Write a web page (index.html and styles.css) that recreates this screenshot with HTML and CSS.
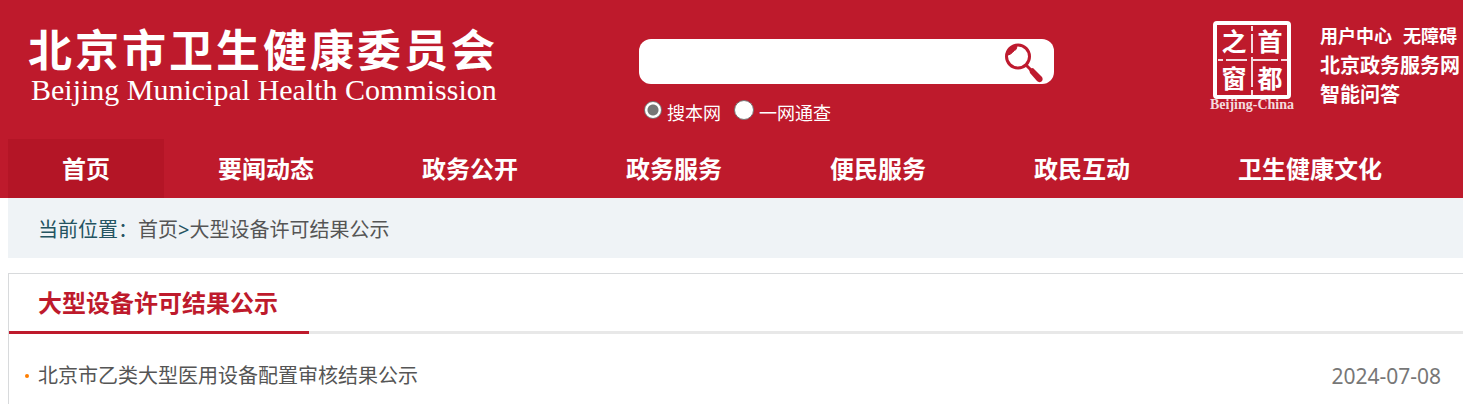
FILE: index.html
```html
<!DOCTYPE html>
<html lang="zh-CN">
<head>
<meta charset="utf-8">
<title>北京市卫生健康委员会</title>
<link rel="stylesheet" href="styles.css">
</head>
<body>
<header class="site-header">
  <div class="banner">
    <div class="brand">
      <div class="brand-cn"><span>北</span><span>京</span><span>市</span><span>卫</span><span>生</span><span>健</span><span>康</span><span>委</span><span>员</span><span>会</span></div>
      <div class="brand-en">Beijing Municipal Health Commission</div>
    </div>
    <form class="search">
      <div class="search-box">
        <input class="search-input" type="text" aria-label="搜索">
        <button class="search-button" type="button" aria-label="搜索">
          <svg width="40" height="42" viewBox="0 0 40 42" fill="none" stroke="#be1a2e" aria-hidden="true">
            <circle cx="14" cy="15.500" r="11.500" stroke-width="3"/>
            <path d="M4.500 14C4 8 9 5 13 5.500L12 8.500C10 9 8 13 4.500 14Z" fill="#be1a2e" stroke-width="1"/>
            <path d="M22 24L27 29" stroke-width="3"/>
            <path d="M25 28L29 27L38 36Q39.500 38.500 37.500 40.500Q35 42 33 40L26 32Z" fill="#be1a2e" stroke="none"/>
          </svg>
        </button>
      </div>
      <div class="scope">
        <label class="scope-item"><input class="radio" type="radio" name="scope" checked>搜本网</label>
        <label class="scope-item"><input class="radio radio-large" type="radio" name="scope">一网通查</label>
      </div>
    </form>
    <div class="portal">
      <svg class="seal" width="88" height="92" viewBox="0 0 88 92" role="img" aria-label="首都之窗">
        <rect x="7" y="2" width="74" height="74" rx="2" fill="none" stroke="#fff" stroke-width="4"/>
        <path d="M44 5V10M44 13V32M44 36V66M44 69V74M10 39H15M18 39H39M43 39H70M73 39H79" stroke="#fff" stroke-width="2" stroke-opacity=".85"/>
        <g class="seal-char">
          <text x="26" y="30">之</text>
          <text x="62" y="30">首</text>
          <text x="26" y="67">窗</text>
          <text x="62" y="67">都</text>
        </g>
        <text class="seal-name" x="44" y="88">Beijing-China</text>
      </svg>
      <div class="portal-links">
        <div class="portal-row"><a href="#">用户中心</a><a href="#">无障碍</a></div>
        <a class="portal-large" href="#">北京政务服务网</a>
        <a class="portal-large" href="#">智能问答</a>
      </div>
    </div>
  </div>
  <nav class="nav">
    <a class="nav-item nav-current" href="#">首页</a>
    <a class="nav-item" href="#">要闻动态</a>
    <a class="nav-item" href="#">政务公开</a>
    <a class="nav-item" href="#">政务服务</a>
    <a class="nav-item" href="#">便民服务</a>
    <a class="nav-item" href="#">政民互动</a>
    <a class="nav-item" href="#">卫生健康文化</a>
  </nav>
</header>
<main class="content">
  <div class="crumbs">当前位置：<a href="#">首页</a>&gt;<a href="#">大型设备许可结果公示</a></div>
  <section class="panel">
    <div class="panel-head"><h1 class="panel-title">大型设备许可结果公示</h1></div>
    <ul class="list">
      <li class="list-item"><a class="list-link" href="#">北京市乙类大型医用设备配置审核结果公示</a><time class="list-date">2024-07-08</time></li>
    </ul>
  </section>
</main>
</body>
</html>
```
FILE: styles.css
```css
* { box-sizing: border-box; }

body {
  margin: 0;
  background: #fff;
  color: #245461;
  font-family: "Noto Sans", "Noto Sans CJK SC", sans-serif;
  overflow-x: hidden;
}

a { color: inherit; text-decoration: none; white-space: nowrap; }

.site-header { background: #be1a2c; color: #fff; }

.banner {
  display: grid;
  grid-template-columns: 639fr 569fr 255fr;
  min-height: 139px;
}

.brand { padding: 23px 0 0 28px; white-space: nowrap; }
.brand-cn {
  display: flex;
  gap: 3px;
  font-family: "Noto Sans CJK SC", sans-serif;
  font-size: 44px;
  font-weight: 700;
  line-height: 50px;
}
.brand-en {
  padding-left: 3px;
  font-family: "Liberation Serif", serif;
  font-size: 30px;
  line-height: 34px;
}

.search { padding-top: 39px; }
.search-box {
  display: flex;
  width: 73%;
  height: 45px;
  border-radius: 12px;
  background: #fff;
}
.search-input {
  flex: 1;
  min-width: 0;
  border: 0;
  padding: 0 12px;
  background: transparent;
  font-size: 18px;
  outline: 0;
}
.search-button {
  width: 50px;
  padding: 0;
  border: 0;
  background: transparent;
  text-align: left;
}
.search-button svg { display: block; }

.scope {
  display: flex;
  gap: 13px;
  padding: 16px 0 0 5px;
  font-size: 18px;
  line-height: 26px;
}
.scope-item { display: flex; gap: 5px; white-space: nowrap; }
.radio {
  appearance: none;
  width: 18px;
  height: 18px;
  margin: 1px 0 0;
  border: 1px solid #767676;
  border-radius: 50%;
  background: #fff;
}
.radio:checked {
  background: radial-gradient(circle, #767676 5px, #fff 6px);
}
.radio-large { width: 20px; height: 20px; margin: 0; }

.portal { display: flex; gap: 24px; }
.seal { flex: none; margin-top: 21px; }
.seal-char {
  fill: #fff;
  font-family: "Noto Sans CJK SC", sans-serif;
  font-size: 25px;
  font-weight: 700;
  text-anchor: middle;
}
.seal-name {
  fill: #fff;
  fill-opacity: .85;
  font-family: "Liberation Serif", serif;
  font-size: 14px;
  font-weight: 700;
  text-anchor: middle;
}
.portal-links {
  display: flex;
  flex-direction: column;
  padding-top: 22px;
  font-size: 18px;
  font-weight: 700;
  line-height: 29px;
}
.portal-row { display: flex; gap: 11px; }
.portal-large { font-size: 20px; }

.nav {
  display: flex;
  padding-left: 8px;
  font-size: 24px;
  font-weight: 700;
  line-height: 59px;
}
.nav-item { padding: 0 54px; }
.nav-current { background: #b41526; }

.content { padding-left: 8px; }
.crumbs {
  padding: 4px 0 0 30px;
  background: #eff3f6;
  font-size: 20px;
  line-height: 56px;
}
.crumbs a, .list-link { color: #555; }

.panel {
  margin-top: 15px;
  border: 1px solid #d8dadc;
  border-width: 1px 0 0 1px;
}
.panel-head { display: flex; box-shadow: inset 0 -3px #e8e8e8; }
.panel-title {
  margin: 0;
  padding: 0 30px 0 29px;
  min-width: 300px;
  border-bottom: 3px solid #be1a2c;
  color: #be1a2c;
  font-size: 24px;
  line-height: 57px;
}
.list { margin: 0; padding: 14px 22px 0 16px; list-style: none; }
.list-item {
  display: flex;
  align-items: center;
  font-size: 20px;
  line-height: 56px;
}
.list-item::before {
  content: "";
  width: 4px;
  height: 4px;
  margin-right: 9px;
  border-radius: 50%;
  background: #ff7e00;
}
.list-date { margin-left: auto; color: #777; font-size: 21px; }
```
